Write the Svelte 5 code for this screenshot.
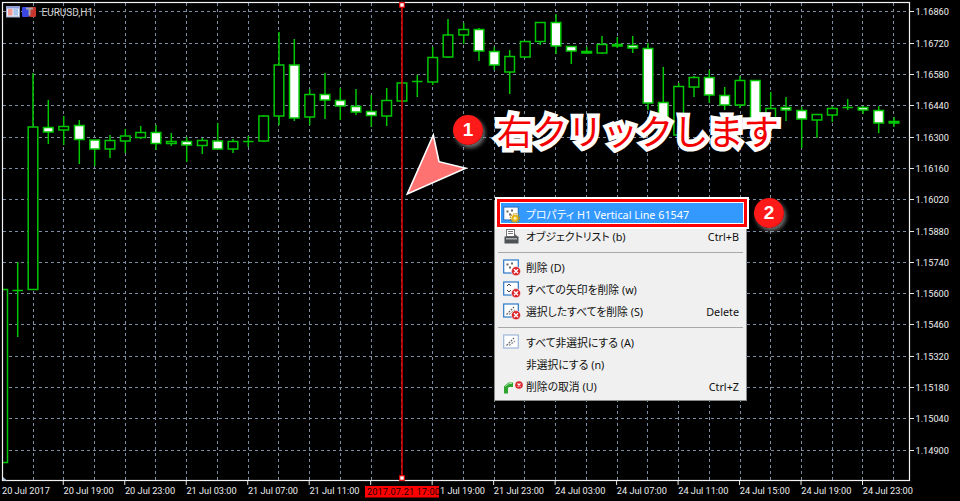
<script>
  // [x, wickTop, wickBottom, bodyTop, bodyBottom, filled]
  const candles = [
    [17.7,262,337,290.5,290.5,0],[33,73,290,127,289.5,0],[48.3,100,144,127.5,132,1],[63.7,116,145,126.5,130,0],
    [79.3,120,164,125.5,139.5,1],[94.7,140,166,140,149,1],[110,135,158,140.5,149,0],[125.3,129,153,136,141,0],
    [140.7,126,139,132.5,137.5,0],[156,125,150,132.5,143.5,1],[171.3,133,146,141.5,143.5,0],[186.7,137,162,141.5,145,1],
    [202.3,138,154,140.5,145.5,0],[217.7,123,149,141,149,1],[233,139,153,141.5,149,0],[248.3,136,147,141.5,141.5,0],
    [263.7,115,142,116,141,0],[279,32,125,65,116,0],[294.3,39,121,65,118,1],[309.7,89,125,94.5,117,0],
    [325,73,119,94.5,100,1],[340.3,88,120,100.5,106,1],[356,89,115,106.5,112,1],[371.3,95,127,111.5,115.5,1],
    [386.7,88,126,100.5,116,0],[402,83,102,83,101,0],[417.3,75,97,81.5,81.5,0],[432.7,47,85,57.5,82,0],
    [448,19,58,35,57,0],[463.7,23,44,29.5,35,0],[479,28,61,29.5,51,1],[494.3,47,70,51.5,65,1],
    [509.7,50,94,56.5,72,0],[525.3,41,58,41.5,57,0],[540.3,22,45,22.5,41.5,0],[556,14,54,22.5,46,1],
    [571.3,46,64,46.5,51,1],[586.7,47,54,51.5,53,1],[602,36,54,44.5,53,0],[617.3,37,48,44.5,46,1],
    [632.7,36,53,45.5,48,1],[648,43,110,48.5,103,1],[663.3,67,125,102.5,125,1],[678.7,83,140,86.5,135,0],
    [694,76,97,77.5,87,0],[709.3,70,103,77.5,95,1],[724.7,87,110,95.5,105,1],[740,76,108,80.5,105,0],
    [755.3,80,125,80.5,125,1],[770.7,92,130,108.5,127,0],[786,97,121,107.5,110,1],[801.7,107,148,110.5,119,1],
    [817,114,138,114.5,120,0],[832.3,106,122,108.5,115,0],[847.7,99,110,107.5,107.5,0],[863,106,114,107.5,110,1],
    [878.7,106,133,110.5,123,1],[894,117,127,121.5,123,1]
  ];
  const prices = ['1.16860','1.16720','1.16580','1.16440','1.16300','1.16160','1.16020','1.15880','1.15740','1.15600','1.15460','1.15320','1.15180','1.15040','1.14900'];
  const times = ['20 Jul 2017','20 Jul 19:00','20 Jul 23:00','21 Jul 03:00','21 Jul 07:00','21 Jul 11:00',null,'1 Jul 19:00','21 Jul 23:00','24 Jul 03:00','24 Jul 07:00','24 Jul 11:00','24 Jul 15:00','24 Jul 19:00','24 Jul 23:00'];
  const hy = prices.map((_, i) => Math.floor(11.7 + i * 31.33) + 0.5);
  const vx = Array.from({ length: 29 }, (_, i) => Math.floor(33 + i * 30.74) + 0.5);
  const groups = [
    [{ label: 'プロパティ H1 Vertical Line 61547', icon: 'gear', selected: true }, { label: 'オブジェクトリスト (b)', key: 'Ctrl+B', icon: 'list' }],
    [{ label: '削除 (D)', icon: 'del' }, { label: 'すべての矢印を削除 (w)', icon: 'delArrow' }, { label: '選択したすべてを削除 (S)', key: 'Delete', icon: 'delAll' }],
    [{ label: 'すべて非選択にする (A)', icon: 'plain' }, { label: '非選択にする (n)' }, { label: '削除の取消 (U)', key: 'Ctrl+Z', icon: 'undo' }]
  ];
</script>

{#snippet redX(cx, cy)}
  <circle {cx} {cy} r="4.6" fill="#d9252b" stroke="#fff" stroke-width="0.6" />
  <path d="M{cx - 2} {cy - 2}l4 4m0-4l-4 4" stroke="#fff" stroke-width="1.4" />
{/snippet}

{#snippet menuIcon(kind)}
  <svg class="ic" viewBox="0 0 21 17" aria-hidden="true">
    {#if kind === 'undo'}
      <path d="M1 15.5v-7l4.5-4h4.5v4.5h-4l-1 1v5.5z" fill="#2fa52f" />
      <path d="M2.5 8.5l3.5-3h3" stroke="#9fe09f" fill="none" />
      <circle cx="16" cy="7" r="3.8" fill="#d9252b" />
      <path d="M14.5 5.5l3 3m0-3l-3 3" stroke="#fff" stroke-width="1.2" />
    {:else if kind === 'list'}
      <rect x="3.5" y="1.5" width="8" height="7" fill="#fff" stroke="#777" />
      <path d="M5 3.5h5M5 5.5h5" stroke="#777" />
      <path d="M11 5l4.5 4.5h-4.5z" fill="#666" />
      <rect x="1.5" y="8.5" width="14" height="7" fill="#4e5256" />
      <rect x="3" y="10" width="11" height="1.5" fill="#a7adb2" />
    {:else}
      <rect x="0.7" y="1" width="14.6" height="13" fill="#fff" stroke={kind === 'plain' ? '#9db6d8' : '#2b78c8'} stroke-width="1.2" />
      {#if kind === 'delArrow'}
        <path d="M4 5l2-2 2 2M8 9l-2 2-2-2" stroke="#444" fill="none" />
      {:else if kind === 'delAll' || kind === 'plain'}
        <path d="M3.5 11.5L11 4" stroke="#666" stroke-dasharray="2 1" stroke-width="1.2" />
        <path d="M6 11.5l6-4.5" stroke="#888" stroke-dasharray="2 1" stroke-width="1.2" />
      {:else}
        <path d="M3.5 4.5h2v2h-2zM8 3.5h2v2H8zM6 7.5h2v2H6z" fill="#666" />
      {/if}
      {#if kind === 'gear'}
        <circle cx="12" cy="12.3" r="4.6" fill="none" stroke="#b58a10" stroke-width="1.2" stroke-dasharray="1.4 1" />
        <circle cx="12" cy="12.3" r="3.6" fill="#e7b416" />
        <circle cx="12" cy="12.3" r="1.5" fill="#fff2b0" />
      {:else if kind !== 'plain'}
        {@render redX(13, 12.2)}
      {/if}
    {/if}
  </svg>
{/snippet}

<div class="screen">
  <svg class="chart" viewBox="0 0 960 501" width="960" height="501" role="img" aria-label="EURUSD H1 chart">
    <g class="grid">
      {#each hy as y}<line x1="3" x2="909" y1={y} y2={y} />{/each}
      {#each vx as x}<line x1={x} x2={x} y1="3" y2="480" />{/each}
    </g>

    <path class="candle" d="M2.5 289.5H7.5V462.5H2.5" />
    {#each candles as [x, t, b, bt, bb, filled]}
      <line class="wick" x1={x} x2={x} y1={t} y2={b} />
      {#if bb - bt < 1}
        <line class="wick" x1={x - 5.2} x2={x + 5.2} y1={bt} y2={bt} />
      {:else}
        <rect class="candle" class:filled x={x - 4.8} y={bt} width="9.6" height={bb - bt} />
      {/if}
    {/each}

    <rect class="frame" x="2.5" y="2.5" width="907" height="478" />
    <path d="M3 477l4 3.5H3z" fill="#a9bdd3" />

    {#each hy as y, i}
      <line class="tick" x1="909" x2="914" y1={y} y2={y} />
      <text class="axis" x="915.5" y={y + 3.3}>{prices[i]}</text>
    {/each}
    {#each times as t, i}
      {#if i > 0}<line class="tick" x1={1.8 + i * 61.48} x2={1.8 + i * 61.48} y1="481" y2="485" />{/if}
      {#if t}
        <text class="axis" x={t.startsWith('1 ') ? 440 : 2 + i * 61.48} y="493.5">{t}</text>
      {/if}
    {/each}

    <line class="vline" x1="402" x2="402" y1="5" y2="478" />
    <rect class="handle" x="399.7" y="2.7" width="4.6" height="4.6" />
    <rect class="handle" x="399.7" y="475.7" width="4.6" height="4.6" />
    <rect x="365" y="486" width="74" height="11.5" fill="#f00" />
    <text class="axis stamp" x="367" y="494.5">2017.07.21 17:00</text>

    <rect x="6.5" y="6.5" width="13" height="10.5" fill="#e9edf6" stroke="#9aa7c8" />
    <rect x="6.5" y="6.5" width="13" height="2" fill="#8c9ad8" />
    <rect x="8" y="9" width="4.5" height="6.5" fill="#ef9a96" />
    <rect x="13.5" y="9" width="4.5" height="6.5" fill="#a7c4ef" />
    <rect x="22" y="7" width="7" height="10" rx="1" fill="#3b47e0" />
    <rect x="29" y="7" width="7" height="10" rx="1" fill="#c7352d" />
    <path d="M26 7.5h7v2h-2.5v6h-2v-6H26z" fill="#a5a5a5" />
    <text class="title" x="41.5" y="16">EURUSD,H1</text>

    <polygon class="arrow" points="433.3,135 439,161.7 465.7,168.3 407.3,194" />
  </svg>

  <div class="badge one">1</div>
  <div class="badge two">2</div>
  <div class="headline">右クリックします</div>

  <div class="menu">
    {#each groups as group, g}
      {#if g > 0}<div class="sep"></div>{/if}
      {#each group as item}
        <div class="item" class:selected={item.selected}>
          <span class="slot">{#if item.icon}{@render menuIcon(item.icon)}{/if}</span>
          <span class="label">{item.label}</span>
          {#if item.key}<span class="key">{item.key}</span>{/if}
        </div>
      {/each}
    {/each}
  </div>
</div>

<style>
  :global(body) { margin: 0; background: #000; }
  .screen { position: relative; width: 960px; height: 501px; overflow: hidden; background: #000; }
  .chart { display: block; }
  .grid line { stroke: #7d8ea3; stroke-width: 1; stroke-dasharray: 3 3; }
  .wick { stroke: #00c800; stroke-width: 1.5; }
  .candle { fill: #000; stroke: #00c800; stroke-width: 1.5; }
  .candle.filled { fill: #fff; }
  .frame { fill: none; stroke: #f2f2f2; stroke-width: 1.2; }
  .tick { stroke: #e8e8e8; stroke-width: 1; }
  .axis { font-family: Roboto, "Liberation Sans", sans-serif; font-size: 9.2px; fill: #eee; }
  .stamp { fill: #1a0000; letter-spacing: 0.1px; }
  .title { font-family: Roboto, "Liberation Sans", sans-serif; font-size: 10px; fill: #d6d6d6; }
  .vline { stroke: #e00000; stroke-width: 1.6; }
  .handle { fill: #fff; stroke: #e00000; stroke-width: 1.2; }
  .arrow { fill: #ff7272; stroke: #fff; stroke-width: 1.6; stroke-linejoin: miter; }

  .badge {
    position: absolute; width: 30px; height: 30px; border-radius: 50%;
    display: flex; align-items: center; justify-content: center;
    background: radial-gradient(circle at 45% 45%, #ff1a1a 60%, #dd0a0a);
    color: #fff; font: 700 19px "Liberation Sans", sans-serif;
    box-shadow: 2px 3px 4px rgba(170, 170, 170, 0.65);
  }
  .one { left: 453px; top: 115px; }
  .two { left: 754px; top: 198px; }

  .headline {
    position: absolute; left: 497px; top: 107px; white-space: nowrap;
    font: 400 35.5px/46px "Noto Sans CJK JP", sans-serif; color: #f40000;
    -webkit-text-stroke: 9px #fff; paint-order: stroke fill;
    letter-spacing: -0.3px;
  }

  .menu {
    position: absolute; left: 495px; top: 201px; width: 251px; height: 199px; box-sizing: border-box;
    padding-top: 2px; background: #f0f0f0; color: #111;
    font: 10.8px "Noto Sans", "Noto Sans CJK JP", sans-serif; font-feature-settings: "palt";
    box-shadow: 0 0 0 1px #8a8a8a;
  }
  .item { display: flex; align-items: center; height: 22px; box-sizing: border-box; padding: 0 4px 2px 0; margin: 0 3px 0 6px; }
  .slot { width: 25px; flex: none; display: flex; }
  .ic { display: block; width: 21px; height: 17px; margin-left: 2px; }
  .key { margin-left: auto; }
  .selected {
    position: relative; height: 20px; padding: 2px 4px 0 0; margin-bottom: 3px; background: #3399ff; color: #fff;
    box-shadow: 0 0 0 1px #fff, 0 0 0 4px #f00, 0 0 0 6px #fff;
  }
  .sep { height: 1px; background: #a8a8a8; margin: 3.5px 3px 4.5px 3px; }
</style>
